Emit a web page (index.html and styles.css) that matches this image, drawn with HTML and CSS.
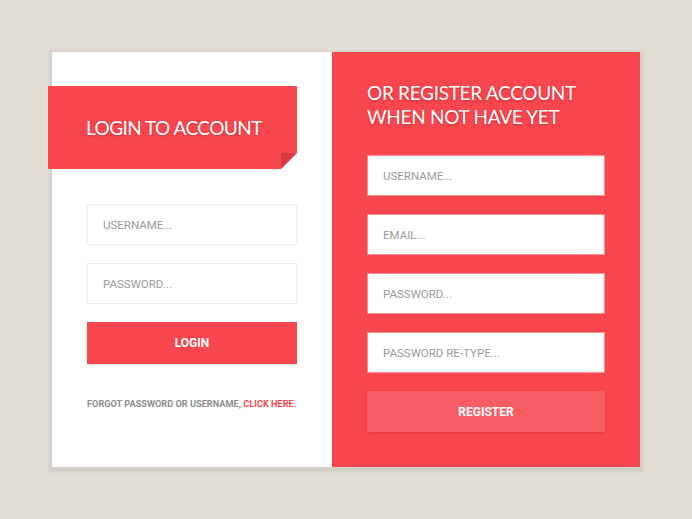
FILE: index.html
```html
<!DOCTYPE html>
<html>
<head>
<meta charset="utf-8">
<link rel="stylesheet" href="styles.css">
</head>
<body>
<div class="card">
  <div class="pane pane-login">
    <div class="ribbon"><h1 class="ribbon-title">LOGIN TO ACCOUNT</h1></div>
    <form class="form form-login">
      <div class="field field-light">USERNAME...</div>
      <div class="field field-light">PASSWORD...</div>
      <div class="btn btn-login">LOGIN</div>
    </form>
    <p class="forgot">FORGOT PASSWORD OR USERNAME, <span class="link">CLICK HERE</span>.</p>
  </div>
  <div class="pane pane-register">
    <h2 class="reg-title">OR REGISTER ACCOUNT<br>WHEN NOT HAVE YET</h2>
    <form class="form form-register">
      <div class="field field-onred">USERNAME...</div>
      <div class="field field-onred">EMAIL...</div>
      <div class="field field-onred">PASSWORD...</div>
      <div class="field field-onred">PASSWORD RE-TYPE...</div>
      <div class="btn btn-register">REGISTER</div>
    </form>
  </div>
</div>
</body>
</html>
```
FILE: styles.css
```css
html, body {
  margin: 0;
  padding: 0;
}
body {
  background: #e0dcd6;
  width: 692px;
  height: 519px;
  overflow: hidden;
  font-family: Roboto, "Liberation Sans", sans-serif;
}
.card {
  display: flex;
  margin: 52px 0 0 52px;
  width: 588px;
  height: 415px;
  box-shadow: 0 2px 3px 3px rgba(90, 80, 60, 0.09);
}
.pane {
  box-sizing: border-box;
  padding: 0 35px;
}
.pane-login {
  width: 280px;
  background: #ffffff;
}
.pane-register {
  width: 308px;
  background: #f8464f;
  padding-top: 29px;
}
.ribbon {
  position: relative;
  margin: 34px 0 0 -39px;
  width: 249px;
  height: 83px;
  background: #f8464f;
  display: flex;
  align-items: center;
  padding-left: 38px;
  box-sizing: border-box;
  clip-path: polygon(0 0, 100% 0, 100% 67px, 233px 100%, 0 100%);
}
.ribbon::after {
  content: "";
  position: absolute;
  right: 0;
  bottom: 0;
  width: 16px;
  height: 16px;
  background: #d93a42;
  clip-path: polygon(0 0, 100% 0, 0 100%);
}
.ribbon-title, .reg-title {
  margin: 0;
  font-family: Lato, "Open Sans", sans-serif;
  font-weight: 400;
  font-size: 19px;
  color: #ffffff;
  text-shadow: 0 1px 2px rgba(120, 20, 25, 0.35);
}
.reg-title {
  line-height: 24px;
  letter-spacing: -0.3px;
  margin-bottom: 26px;
}
.ribbon-title {
  line-height: 24px;
  letter-spacing: -0.55px;
}
.form {
  display: flex;
  flex-direction: column;
  gap: 18px;
  margin: 0;
}
.form-login {
  margin-top: 35px;
}
.field {
  box-sizing: border-box;
  height: 41px;
  padding-left: 15px;
  display: flex;
  align-items: center;
  font-size: 11.5px;
  color: #9b9b9b;
  background: #ffffff;
}
.field-light {
  border: 1px solid #ebebeb;
}
.field-onred {
  border: 1px solid #fb8d92;
}
.btn {
  height: 42px;
  display: flex;
  align-items: center;
  justify-content: center;
  color: #ffffff;
  font-weight: 700;
  font-size: 12px;
}
.btn-login {
  background: #f8464f;
  box-shadow: 0 1px 1px rgba(0, 0, 0, 0.1);
}
.btn-register {
  height: 41px;
  background: #f85d65;
  box-shadow: 0 1px 2px rgba(150, 20, 30, 0.25);
}
.forgot {
  margin: 34px 0 0;
  font-size: 9.2px;
  font-weight: 700;
  color: #8c8c8c;
  white-space: nowrap;
}
.link {
  color: #f8464f;
}
```
